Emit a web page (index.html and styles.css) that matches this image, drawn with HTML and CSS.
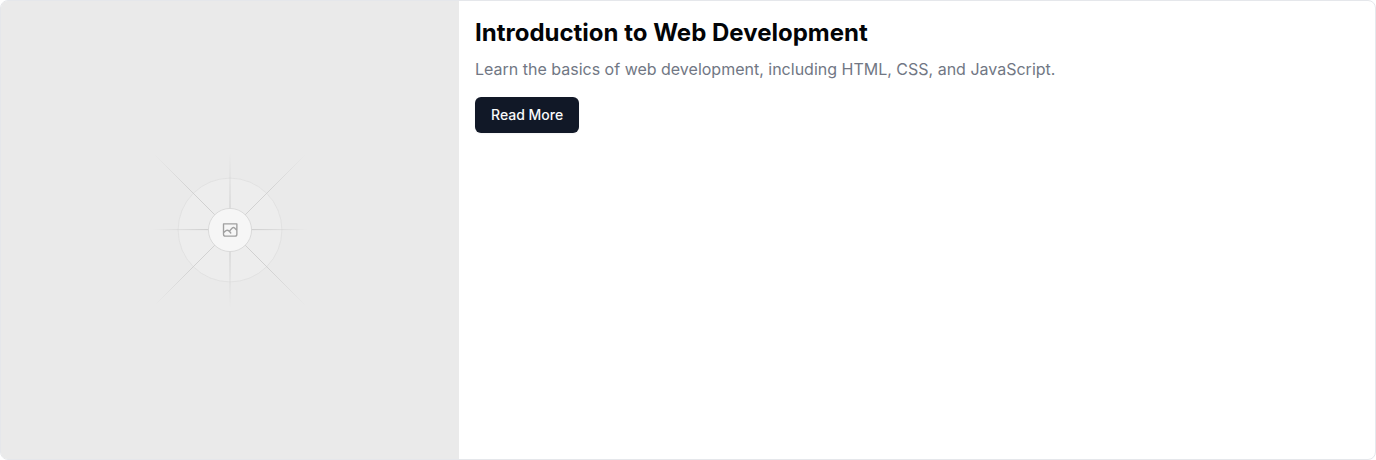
FILE: index.html
```html
<!DOCTYPE html>
<html lang="en">
<head>
<meta charset="utf-8">
<meta name="viewport" content="width=device-width, initial-scale=1">
<title>Introduction to Web Development</title>
<link rel="stylesheet" href="styles.css">
</head>
<body>
<article class="card">
  <div class="card-media">
    <svg class="placeholder" viewBox="0 0 1200 1200" fill="none" role="img" aria-label="Placeholder image">
      <defs>
        <radialGradient id="ray" gradientUnits="userSpaceOnUse" cx="600" cy="600" r="204">
          <stop offset="0.3" stop-color="#cccccc"/>
          <stop offset="1" stop-color="#cccccc" stop-opacity="0"/>
        </radialGradient>
        <radialGradient id="diagonal" gradientUnits="userSpaceOnUse" cx="600" cy="600" r="280">
          <stop offset="0.5" stop-color="#cfcfcf"/>
          <stop offset="1" stop-color="#cfcfcf" stop-opacity="0"/>
        </radialGradient>
      </defs>
      <rect width="1200" height="1200" fill="#eaeaea"/>
      <circle cx="600" cy="600" r="136" fill="#ededed" stroke="#e0e0e0" stroke-width="2.4"/>
      <path d="M396 599H804M600 396V804" stroke="url(#ray)" stroke-width="2.6"/>
      <path d="M402 402L798 798M798 402L402 798" stroke="url(#diagonal)" stroke-width="2.4"/>
      <circle cx="600" cy="600" r="56.5" fill="#f6f6f6" stroke="#d8d8d8" stroke-width="2.4"/>
      <path d="M583 584H618V611Q618 616 613 616H588Q583 616 583 611ZM583 607L589 602Q593 599 598 603L602 608M599 603Q601 601 603 598L606 595Q609 592 612 595L618 601" stroke="#a0a0a0" stroke-width="3.6" stroke-linecap="round" stroke-linejoin="round"/>
    </svg>
  </div>
  <div class="card-body">
    <h2 class="card-title">Introduction to Web Development</h2>
    <p class="card-text">Learn the basics of web development, including HTML, CSS, and JavaScript.</p>
    <button class="button" type="button">Read More</button>
  </div>
</article>
</body>
</html>
```
FILE: styles.css
```css
*, *::before, *::after {
  box-sizing: border-box;
}

body {
  margin: 0;
  background: #fff;
  color: #020407;
  font-family: Inter, "Liberation Sans", sans-serif;
}

.card {
  display: grid;
  grid-template-columns: 1fr 2fr;
  overflow: hidden;
  border: 1px solid #e5e7eb;
  border-radius: 8px;
  background: #fff;
}

.card-media {
  background: #eaeaea;
}

.placeholder {
  display: block;
  width: 100%;
  height: auto;
}

.card-body {
  padding: 16px;
}

.card-title {
  margin: 0 0 8px;
  font-size: 24px;
  font-weight: 700;
  line-height: 32px;
}

.card-text {
  margin: 0 0 16px;
  color: #717784;
  font-size: 16px;
  font-weight: 400;
  line-height: 24px;
}

.button {
  height: 36px;
  padding: 0 16px;
  border: 0;
  border-radius: 6px;
  background: #111827;
  color: #f9fafb;
  font: 500 14px/20px Inter, "Liberation Sans", sans-serif;
  box-shadow: 0 1px 2px rgb(0 0 0 / 5%);
  cursor: pointer;
}
```
